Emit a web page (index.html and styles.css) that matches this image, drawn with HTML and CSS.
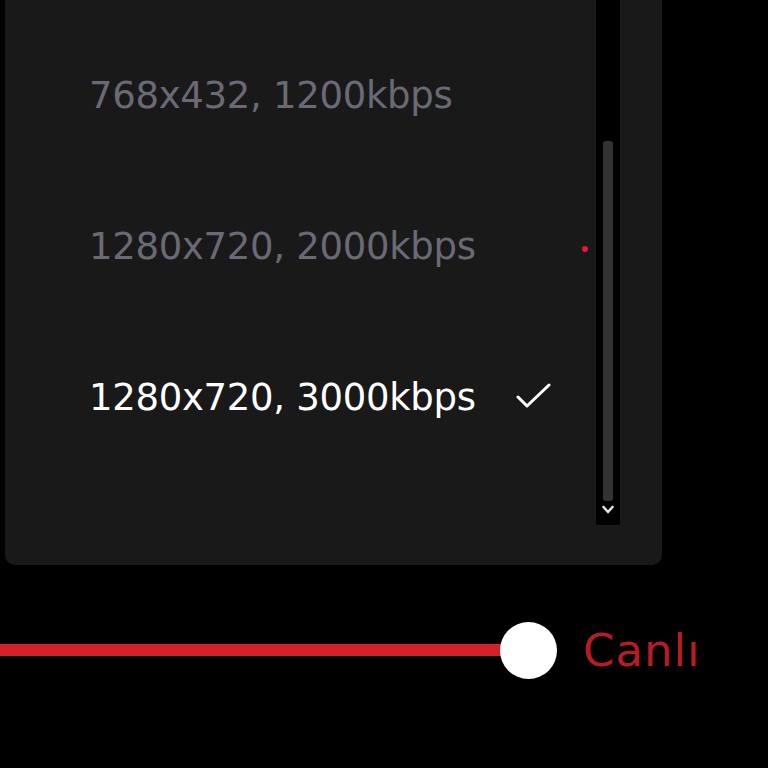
FILE: index.html
```html
<!DOCTYPE html>
<html>
<head>
<meta charset="utf-8">
<link rel="stylesheet" href="styles.css">
</head>
<body>
<div class="panel">
  <ul class="list">
    <li class="item muted"><span class="label">768x432, 1200kbps</span></li>
    <li class="item muted"><span class="label">1280x720, 2000kbps</span><span class="dot"></span></li>
    <li class="item active"><span class="label">1280x720, 3000kbps</span>
      <svg class="check" width="36" height="28" viewBox="0 0 36 28"><polyline points="2,14 11,23 33,2" fill="none" stroke="#fff" stroke-width="3" stroke-linecap="round" stroke-linejoin="round"/></svg>
    </li>
  </ul>
  <div class="scrollbar">
    <div class="thumb"></div>
    <svg class="arrow" width="14" height="12" viewBox="0 0 14 12"><polyline points="2.5,3 7,8 11.5,3" fill="none" stroke="#e0e0e0" stroke-width="2.6" stroke-linecap="round" stroke-linejoin="round"/></svg>
  </div>
</div>
<div class="progress">
  <div class="bar"></div>
  <div class="knob"></div>
  <span class="live">Canlı</span>
</div>
</body>
</html>
```
FILE: styles.css
```css
html, body {
  margin: 0;
  padding: 0;
  background: #000;
  width: 768px;
  height: 768px;
  overflow: hidden;
  font-family: "DejaVu Sans", sans-serif;
}
.panel {
  margin-left: 5px;
  width: 657px;
  height: 565px;
  background: #191919;
  border-radius: 0 0 10px 10px;
  display: flex;
}
.list {
  list-style: none;
  margin: 0;
  padding: 20px 0 0 84px;
  flex: 1;
}
.item {
  height: 151px;
  display: flex;
  align-items: center;
  font-size: 37px;
  letter-spacing: -0.3px;
}
.muted { color: #6a6a75; }
.active { color: #fff; }
.label { width: 427px; }
.check { margin-top: -2px; }
.dot {
  width: 6px;
  height: 6px;
  border-radius: 50%;
  background: #e5173a;
  margin-left: 66px;
  margin-top: 4px;
}
.scrollbar {
  width: 24px;
  height: 525px;
  background: #000;
  margin-right: 42px;
  display: flex;
  flex-direction: column;
  align-items: center;
  padding-top: 141px;
  box-sizing: border-box;
}
.thumb {
  width: 10px;
  height: 360px;
  background: #333;
  border-radius: 3px;
}
.arrow { margin-top: 3px; }
.progress {
  margin-top: 57px;
  height: 56px;
  display: flex;
  align-items: center;
}
.bar {
  width: 510px;
  height: 12px;
  background: #d22128;
}
.knob {
  width: 57px;
  height: 57px;
  border-radius: 50%;
  background: #fff;
  margin-left: -10px;
}
.live {
  margin-left: 26px;
  color: #b51d26;
  font-size: 45px;
  letter-spacing: 1px;
}
```
